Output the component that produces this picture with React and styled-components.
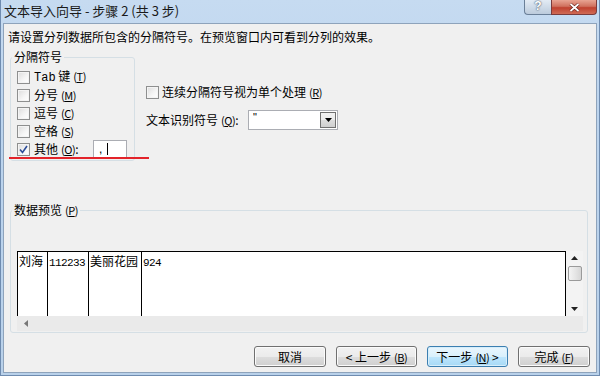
import React from "react";
import styled, { createGlobalStyle } from "styled-components";

const GlobalStyle = createGlobalStyle`
  html, body {
    margin: 0;
    padding: 0;
  }
  body {
    width: 600px;
    height: 376px;
    overflow: hidden;
    font-family: "Noto Sans CJK SC", "Liberation Sans", sans-serif;
    font-size: 12px;
    color: #000;
  }
`;

const Window = styled.div`
  width: 600px;
  height: 376px;
  box-sizing: border-box;
  display: flex;
  flex-direction: column;
  background: linear-gradient(180deg, #c6dbf1 0%, #bcd4ee 30%, #b9d1ea 100%);
  border-left: 1px solid #6f8cb0;
  border-right: 1px solid #6f8cb0;
  border-bottom: 1px solid #6f8cb0;
`;

const TitleBar = styled.div`
  height: 23px;
  display: flex;
  justify-content: space-between;
  align-items: flex-start;
  flex-shrink: 0;
`;

const Title = styled.div`
  padding: 3px 0 0 3px;
  font-size: 13px;
  line-height: 16px;
  color: #1a1a1a;
`;

const CaptionButtons = styled.div`
  display: flex;
  margin-right: 2px;
`;

const HelpButton = styled.div`
  width: 27px;
  height: 15px;
  box-sizing: border-box;
  border: 1px solid #6a7f98;
  border-top: none;
  border-right: none;
  border-radius: 0 0 0 4px;
  background: linear-gradient(180deg, #e3ebf4 0%, #cfdbe8 50%, #bccbdc 100%);
  color: #fff;
  font-family: "Liberation Sans", sans-serif;
  font-weight: bold;
  font-size: 12px;
  line-height: 13px;
  text-align: center;
  text-shadow: 0 0 2px #4a5a70, 0 0 1px #4a5a70;
`;

const CloseButton = styled.div`
  width: 46px;
  height: 15px;
  box-sizing: border-box;
  border: 1px solid #7a3b3b;
  border-top: none;
  border-radius: 0 0 4px 0;
  background: linear-gradient(180deg, #e8a493 0%, #d0715e 45%, #c0412f 55%, #cf6a55 100%);
  display: flex;
  align-items: center;
  justify-content: center;
`;

const Client = styled.div`
  flex: 1;
  margin: 0 2px 2px 2px;
  background: #f0f0f0;
  border: 1px solid #8ea3bb;
  display: flex;
  flex-direction: column;
  position: relative;
`;

const Intro = styled.div`
  padding: 6px 0 0 4px;
  line-height: 14px;
`;

const OptionsRow = styled.div`
  display: flex;
  align-items: flex-start;
  margin: 6px 0 0 6px;
  position: relative;
`;

const GroupBox = styled.fieldset`
  margin: 0;
  box-sizing: border-box;
  width: ${(p) => p.$width || "auto"};
  padding: ${(p) => p.$pad};
  border: 1px solid #d5dfe5;
  border-radius: 3px;
  min-width: 0;
`;

const Legend = styled.legend`
  padding: 0 2px;
  margin-left: -5px;
  line-height: 14px;
`;

const CheckRow = styled.div`
  display: flex;
  align-items: center;
  height: ${(p) => p.$h || 18}px;
  gap: ${(p) => p.$gap || 4}px;
`;

const Box = styled.span`
  width: 13px;
  height: 13px;
  box-sizing: border-box;
  border: 1px solid #8e8f8f;
  background: linear-gradient(135deg, #dcdcdc 0%, #f6f6f6 60%, #ffffff 100%);
  box-shadow: inset 0 0 0 1px #f4f4f4;
  display: flex;
  align-items: center;
  justify-content: center;
  flex-shrink: 0;
`;

const Label = styled.span`
  line-height: 14px;
  white-space: nowrap;
  width: ${(p) => (p.$w ? `${p.$w}px` : "auto")};
`;

const Key = styled.span`
  font-size: 11px;
  margin-left: 3px;
  letter-spacing: -0.5px;
`;

const Mono = styled.span`
  font-family: "Liberation Mono", monospace;
  font-size: 12px;
`;

const TextInput = styled.div`
  width: 34px;
  height: 19px;
  box-sizing: border-box;
  background: #fff;
  border: 1px solid #abadb3;
  display: flex;
  align-items: center;
  padding-left: 5px;
  font-family: "Liberation Sans", sans-serif;
  font-size: 12px;
`;

const Caret = styled.span`
  width: 1px;
  height: 12px;
  background: #000;
  margin-left: 5px;
`;

const RightColumn = styled.div`
  margin-left: 11px;
  padding-top: 34px;
  display: flex;
  flex-direction: column;
  gap: 10px;
`;

const SelectRow = styled.div`
  display: flex;
  align-items: center;
  height: 20px;
`;

const Select = styled.div`
  width: 90px;
  height: 20px;
  box-sizing: border-box;
  background: #fff;
  border: 1px solid #abadb3;
  display: flex;
  justify-content: space-between;
`;

const SelectValue = styled.span`
  padding: 0 0 0 4px;
  font-family: "Liberation Sans", sans-serif;
  font-size: 11px;
  line-height: 12px;
`;

const DropButton = styled.span`
  width: 16px;
  margin: 1px;
  box-sizing: border-box;
  border: 1px solid #707070;
  background: linear-gradient(180deg, #f2f2f2 0%, #ebebeb 50%, #dddddd 51%, #cfcfcf 100%);
  display: flex;
  align-items: center;
  justify-content: center;
`;

const RedMark = styled.div`
  position: absolute;
  left: -1px;
  top: 107px;
  width: 140px;
  height: 2px;
  background: #e3232a;
`;

const PreviewGroup = styled(GroupBox)`
  margin: 42px 8px 0 6px;
`;

const PreviewPane = styled.div`
  display: grid;
  grid-template-columns: 1fr 17px;
  grid-template-rows: 65px 15px;
`;

const DataArea = styled.div`
  background: #fff;
  border: 1px solid #000;
  border-bottom: none;
  display: flex;
`;

const DataCol = styled.div`
  width: ${(p) => (p.$w ? `${p.$w}px` : "auto")};
  flex: ${(p) => (p.$w ? "none" : "1")};
  border-right: ${(p) => (p.$w ? "1px solid #000" : "none")};
  padding: 2px 0 0 1px;
  box-sizing: border-box;
  line-height: 14px;
  white-space: nowrap;
`;

const NumText = styled.span`
  font-family: "Liberation Mono", monospace;
  font-size: 11px;
  letter-spacing: -0.6px;
`;

const VScroll = styled.div`
  background: #f3f3f3;
  display: flex;
  flex-direction: column;
  align-items: center;
`;

const ArrowCell = styled.div`
  width: 17px;
  height: 14px;
  display: flex;
  align-items: center;
  justify-content: center;
  flex-shrink: 0;
`;

const Thumb = styled.div`
  width: 14px;
  height: 15px;
  box-sizing: border-box;
  border: 1px solid #9a9a9a;
  border-radius: 2px;
  background: linear-gradient(90deg, #f4f4f4 0%, #e6e6e6 50%, #d6d6d6 100%);
  margin-top: 1px;
  margin-bottom: auto;
`;

const HScroll = styled.div`
  grid-column: 1 / -1;
  background: #eaeaea;
  display: flex;
  align-items: center;
  padding-left: 7px;
`;

const ButtonRow = styled.div`
  display: flex;
  justify-content: flex-end;
  gap: 10px;
  margin-top: 13px;
  padding-right: 6px;
`;

const DialogButton = styled.div`
  width: ${(p) => p.$w}px;
  height: 21px;
  box-sizing: border-box;
  border: 1px solid ${(p) => (p.$focused ? "#3c7fb1" : "#707070")};
  border-radius: 3px;
  background: ${(p) =>
    p.$focused
      ? "linear-gradient(180deg, #eaf6fd 0%, #d9f0fc 50%, #bee6fd 51%, #a7d9f5 100%)"
      : "linear-gradient(180deg, #f2f2f2 0%, #ebebeb 50%, #dddddd 51%, #cfcfcf 100%)"};
  box-shadow: inset 0 0 0 1px ${(p) => (p.$focused ? "#d6eefb" : "#fbfbfb")};
  display: flex;
  align-items: center;
  justify-content: center;
  line-height: 14px;
  white-space: nowrap;
`;

const Check = ({ checked }) => (
  <Box>
    {checked && (
      <svg width="9" height="9" viewBox="0 0 9 9">
        <path d="M1 4.5 L3.5 7.5 L8 1" fill="none" stroke="#2c4c98" strokeWidth="1.6" />
      </svg>
    )}
  </Box>
);

const Arrow = ({ dir, color = "#222" }) => {
  const pts = {
    up: "0,4 3.5,0 7,4",
    down: "0,0 3.5,4 7,0",
    left: "4,0 0,3.5 4,7",
  }[dir];
  const w = dir === "left" ? 4 : 7;
  const h = dir === "left" ? 7 : 4;
  return (
    <svg width={w} height={h} viewBox={`0 0 ${w} ${h}`} style={{ flexShrink: 0, display: "block" }}>
      <polygon points={pts} fill={color} />
    </svg>
  );
};

const separators = [
  { label: <><Mono>Tab</Mono> 键</>, key: "T" },
  { label: "分号", key: "M" },
  { label: "逗号", key: "C" },
  { label: "空格", key: "S" },
];

const App = () => {
  return (
    <>
      <GlobalStyle />
      <Window>
        <TitleBar>
          <Title>文本导入向导 - 步骤 2 (共 3 步)</Title>
          <CaptionButtons>
            <HelpButton>?</HelpButton>
            <CloseButton>
              <svg width="11" height="9" viewBox="0 0 11 9">
                <path d="M1.5 1 L9.5 8 M9.5 1 L1.5 8" stroke="#5a1a14" strokeWidth="3" />
                <path d="M1.5 1 L9.5 8 M9.5 1 L1.5 8" stroke="#fff" strokeWidth="1.8" />
              </svg>
            </CloseButton>
          </CaptionButtons>
        </TitleBar>
        <Client>
          <Intro>请设置分列数据所包含的分隔符号。在预览窗口内可看到分列的效果。</Intro>
          <OptionsRow>
            <GroupBox $width="125px" $pad="4px 6px 2px 6px">
              <Legend>分隔符号</Legend>
              {separators.map((s) => (
                <CheckRow key={s.key}>
                  <Check />
                  <Label>
                    {s.label}
                    <Key>(<u>{s.key}</u>)</Key>
                  </Label>
                </CheckRow>
              ))}
              <CheckRow>
                <Check checked />
                <Label $w={55}>
                  其他<Key>(<u>O</u>)</Key>:
                </Label>
                <TextInput>
                  ,<Caret />
                </TextInput>
              </CheckRow>
            </GroupBox>
            <RightColumn>
              <CheckRow $h={16} $gap={3}>
                <Check />
                <Label>
                  连续分隔符号视为单个处理<Key>(<u>R</u>)</Key>
                </Label>
              </CheckRow>
              <SelectRow>
                <Label $w={102}>
                  文本识别符号<Key>(<u>Q</u>)</Key>:
                </Label>
                <Select>
                  <SelectValue>"</SelectValue>
                  <DropButton>
                    <Arrow dir="down" color="#000" />
                  </DropButton>
                </Select>
              </SelectRow>
            </RightColumn>
            <RedMark />
          </OptionsRow>
          <PreviewGroup $pad="34px 4px 1px 6px">
            <Legend>
              数据预览<Key>(<u>P</u>)</Key>
            </Legend>
            <PreviewPane>
              <DataArea>
                <DataCol $w={30}>刘海</DataCol>
                <DataCol $w={41}>
                  <NumText>112233</NumText>
                </DataCol>
                <DataCol $w={53}>美丽花园</DataCol>
                <DataCol>
                  <NumText>924</NumText>
                </DataCol>
              </DataArea>
              <VScroll>
                <ArrowCell>
                  <Arrow dir="up" />
                </ArrowCell>
                <Thumb />
                <ArrowCell>
                  <Arrow dir="down" />
                </ArrowCell>
              </VScroll>
              <HScroll>
                <Arrow dir="left" color="#777" />
              </HScroll>
            </PreviewPane>
          </PreviewGroup>
          <ButtonRow>
            <DialogButton $w={72}>取消</DialogButton>
            <DialogButton $w={81}>
              &lt; 上一步<Key>(<u>B</u>)</Key>
            </DialogButton>
            <DialogButton $w={81} $focused>
              下一步<Key>(<u>N</u>)</Key>&nbsp;&gt;
            </DialogButton>
            <DialogButton $w={72}>
              完成<Key>(<u>F</u>)</Key>
            </DialogButton>
          </ButtonRow>
        </Client>
      </Window>
    </>
  );
};

export default App;
